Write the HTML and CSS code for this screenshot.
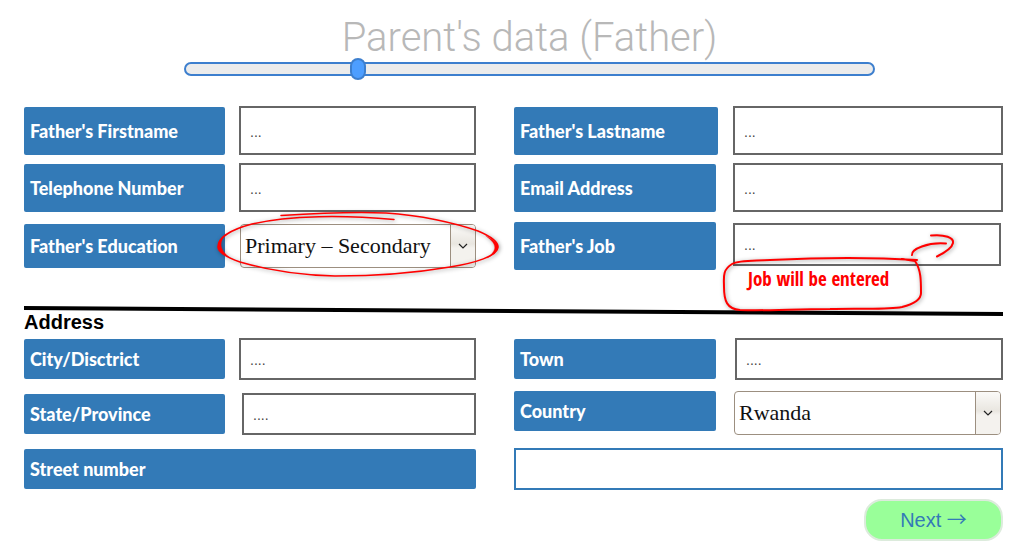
FILE: index.html
```html
<!DOCTYPE html>
<html lang="en">
<head>
<meta charset="utf-8">
<title>Parent's data (Father)</title>
<link rel="stylesheet" href="styles.css">
</head>
<body>
<form class="form">
  <header class="header">
    <h1 class="title">Parent's data (Father)</h1>
    <input class="progress" type="range" min="0" max="1000" value="244" aria-label="Form progress">
  </header>

  <section class="fields fields-parent">
    <div class="field left">
      <label class="label tall" for="firstname">Father's Firstname</label>
      <input class="text tall-box" id="firstname" type="text" placeholder="...">
    </div>
    <div class="field right">
      <label class="label tall wide" for="lastname">Father's Lastname</label>
      <input class="text tall-box" id="lastname" type="text" placeholder="...">
    </div>
    <div class="field left">
      <label class="label tall" for="phone">Telephone Number</label>
      <input class="text tall-box" id="phone" type="text" placeholder="...">
    </div>
    <div class="field right">
      <label class="label tall" for="email">Email Address</label>
      <input class="text tall-box" id="email" type="text" placeholder="...">
    </div>
    <div class="field left last">
      <label class="label medium" for="education">Father's Education</label>
      <div class="picker">
        <select class="select" id="education"><option>Primary – Secondary</option></select>
        <span class="arrow"><svg width="10" height="6" viewBox="0 0 10 6"><path d="M1 1l4 4 4-4" fill="none" stroke="#222" stroke-width="1.200"/></svg></span>
        <svg class="ring" viewBox="215 208 287 72" preserveAspectRatio="none" fill="#f00" stroke="#f00" stroke-linecap="round">
          <path fill="none" stroke-width="1.500" d="M281 215.500C320 213 350 211.500 386 213C420 215 455 223 478 231C490 236 498 242 498 247C498 256 475 263 450 267C415 273 378 276 335 276C300 275 264 269 240 262C226 257 218 252 218 247C218 237 233 229 252 224C290 215 345 215 394 219.500"/>
          <path stroke-width=".300" d="M229 257C216 251 214 243 226 234C219 242 219 249 229 257ZM486 236C502 244 502 250 487 258C497 250 498 245 486 236Z"/>
        </svg>
      </div>
    </div>
    <div class="field right last">
      <label class="label tall" for="job">Father's Job</label>
      <div class="job">
        <input class="text medium-box" id="job" type="text" placeholder="...">
        <div class="callout">
          <svg class="callout-shape" width="240" height="88" viewBox="718 228 240 88" fill="none" stroke="#f00" stroke-width="2" stroke-linecap="round">
            <path d="M917 260C870 257 810 258 770 260C752 261 739 260 732 264C722 270 724 278 724 287C724 301 727 309 740 310C770 311 792 309 830 309C860 308 887 310 902 307C914 304 921 299 921 293C921 280 921 270 915 261L902 259"/>
            <path d="M912 255C911 249 928 242 946 243.500M931 235.500C945 234 954 238 953 243C952 248 946 252 937 256.500"/>
          </svg>
          <span class="callout-text">Job will be entered</span>
        </div>
      </div>
    </div>
  </section>

  <svg class="divider" viewBox="0 0 979 8" preserveAspectRatio="none"><path d="M0 2L979 8" stroke="#000" stroke-width="4"/></svg>
  <h2 class="subtitle">Address</h2>

  <section class="fields fields-address">
    <div class="field left">
      <label class="label" for="city">City/Disctrict</label>
      <input class="text" id="city" type="text" placeholder="....">
    </div>
    <div class="field right inset">
      <label class="label" for="town">Town</label>
      <input class="text" id="town" type="text" placeholder="....">
    </div>
    <div class="field left inset">
      <label class="label" for="state">State/Province</label>
      <input class="text" id="state" type="text" placeholder="....">
    </div>
    <div class="field right top">
      <label class="label" for="country">Country</label>
      <div class="picker">
        <select class="select" id="country"><option>Rwanda</option></select>
        <span class="arrow"><svg width="10" height="6" viewBox="0 0 10 6"><path d="M1 1l4 4 4-4" fill="none" stroke="#222" stroke-width="1.200"/></svg></span>
      </div>
    </div>
    <label class="label street" for="street">Street number</label>
    <input class="text blue" id="street" type="text">
  </section>

  <button class="next" type="button">Next <span class="next-arrow">→</span></button>
</form>
</body>
</html>
```
FILE: styles.css
```css
* { box-sizing: border-box; }
body { margin: 0; background: #fff; font-family: "Liberation Sans", Arial, sans-serif; }
.form { display: flex; flex-direction: column; padding: 15px 25px 4px 24px; }

.header { display: flex; flex-direction: column; align-items: center; padding-left: 32px; }
.title { margin: 0; font: 300 40px/46px Roboto, sans-serif; color: #b8b8b8; }
.progress {
  appearance: none; width: 73%; height: 14px; margin: 1px 0 0;
  background: #ececec; border: 2px solid #3d7fce; border-radius: 8px;
}
.progress::-webkit-slider-thumb {
  appearance: none; width: 16px; height: 22px;
  background: #4d9eff; border: 2px solid #3d7fce; border-radius: 8px;
}

.fields { display: grid; grid-template-columns: 452fr 489fr; column-gap: 38px; align-items: center; }
.fields-parent { row-gap: 8px; margin-top: 30px; }
.fields-address { row-gap: 11px; margin-top: 8px; }
.field { display: grid; align-items: center; }
.left { grid-template-columns: 215px 1fr; }
.right { grid-template-columns: 219px 1fr; }
.left.inset { grid-template-columns: 218px 1fr; }
.right.inset { grid-template-columns: 221px 1fr; }
.last { height: 52px; }
.top { align-items: start; height: 46px; }

.label {
  display: flex; align-items: center; width: 201px; height: 40px; padding: 0 6px;
  background: #337ab7; border-radius: 2px; color: #fff;
  font: 900 18px/24px Lato, sans-serif; font-variant-ligatures: none;
}
.right .label { width: 202px; }
.label.medium { height: 44px; }
.label.tall { height: 48px; }
.right .label.wide { width: 204px; }
.label.street { width: 100%; }

.text {
  width: 100%; min-width: 0; height: 42px; padding: 2px 9px 0; border: 2px solid #666; border-radius: 0;
  background: #fff; color: #222; font: 14px/18px "Liberation Sans", Arial, sans-serif;
}
.text::placeholder { color: #444; opacity: 1; }
.tall-box { height: 49px; }
.medium-box { height: 43px; }
.blue { border-color: #337ab7; }

.picker { position: relative; height: 44px; margin-left: 1px; }
.right .picker, .job { margin-right: 2px; }
.select {
  appearance: none; display: block; width: 100%; height: 100%; padding: 0 28px 0 4px;
  border: 1px solid #9c8f80; border-radius: 4px; background: #fff; color: #111;
  font: 22px/28px "Liberation Serif", "Times New Roman", serif;
}
.arrow {
  position: absolute; top: 1px; right: 1px; bottom: 1px; width: 25px;
  display: flex; align-items: center; justify-content: center; pointer-events: none;
  border-left: 1px solid #9c8f80; border-radius: 0 3px 3px 0;
  background: linear-gradient(#fbfaf8, #e9e6e0 45%, #f4f2ee 55%, #f4f2ee);
}
.ring {
  position: absolute; left: -25px; top: -16px; width: calc(100% + 51px); height: 72px;
  overflow: visible; pointer-events: none; filter: drop-shadow(1px 1px 2px rgba(0, 0, 0, .4));
}

.job { position: relative; margin-bottom: 4px; }
.job .text { display: block; }
.callout { position: absolute; left: -15px; top: 5px; width: 240px; height: 88px; pointer-events: none; }
.callout-shape { display: block; filter: drop-shadow(1px 1px 2px rgba(0, 0, 0, .4)); }
.callout-text {
  position: absolute; left: 30px; top: 39px; white-space: nowrap; color: #f00;
  font: 700 19px/24px "Liberation Sans Narrow", "Open Sans Condensed", "DejaVu Sans Condensed", sans-serif;
}

.divider { display: block; width: 100%; height: 8px; margin-top: 34px; overflow: visible; }
.subtitle { margin: 0; font-size: 20px; line-height: 16px; color: #000; }

.next {
  align-self: flex-end; width: 139px; height: 42px; margin-top: 9px; padding: 0;
  border: 2px solid #dcebdc; border-radius: 18px; background: #9f9; color: #337ab7;
  font: 20px/24px "Liberation Sans", Arial, sans-serif;
}
.next-arrow { font-family: "Noto Sans CJK JP", "DejaVu Sans", sans-serif; line-height: 20px; }
```
